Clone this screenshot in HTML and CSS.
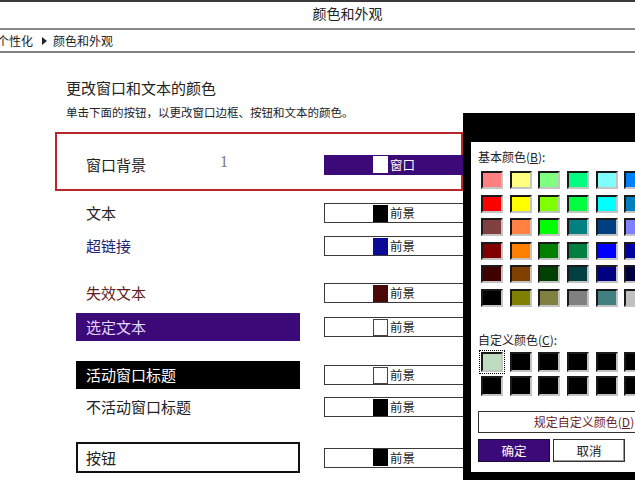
FILE: index.html
```html
<!DOCTYPE html>
<html lang="zh-CN">
<head>
<meta charset="utf-8">
<title>颜色和外观</title>
<link rel="stylesheet" href="styles.css">
</head>
<body>
<header class="titlebar"><span>颜色和外观</span></header>
<nav class="crumbs">
  <span class="crumb-first">个性化</span>
  <svg class="arrow" width="5" height="8" viewBox="0 0 5 8"><path d="M0 0 L5 4 L0 8 Z" fill="#222"/></svg>
  <span>颜色和外观</span>
</nav>
<main class="content">
  <h1 class="heading">更改窗口和文本的颜色</h1>
  <p class="hint">单击下面的按钮，以更改窗口边框、按钮和文本的颜色。</p>
  <div class="rows">
    <div class="row row-hl">
      <div class="label">窗口背景<span class="mark">1</span></div>
      <div class="cbtn cbtn-win"><span class="sw sw-white"></span><span>窗口</span></div>
    </div>
    <div class="row gap8">
      <div class="label">文本</div>
      <div class="cbtn"><span class="sw sw-black"></span><span>前景</span></div>
    </div>
    <div class="row gap5">
      <div class="label lbl-link">超链接</div>
      <div class="cbtn"><span class="sw sw-blue"></span><span>前景</span></div>
    </div>
    <div class="row gap19">
      <div class="label lbl-dis">失效文本</div>
      <div class="cbtn"><span class="sw sw-maroon"></span><span>前景</span></div>
    </div>
    <div class="row gap6">
      <div class="label lbl-sel">选定文本</div>
      <div class="cbtn"><span class="sw sw-white sw-outline"></span><span>前景</span></div>
    </div>
    <div class="row gap20">
      <div class="label lbl-active">活动窗口标题</div>
      <div class="cbtn"><span class="sw sw-white sw-outline"></span><span>前景</span></div>
    </div>
    <div class="row gap4">
      <div class="label">不活动窗口标题</div>
      <div class="cbtn"><span class="sw sw-black"></span><span>前景</span></div>
    </div>
    <div class="row row-btn gap21">
      <div class="label lbl-button">按钮</div>
      <div class="cbtn"><span class="sw sw-black"></span><span>前景</span></div>
    </div>
  </div>
</main>

<section class="dialog">
  <div class="dlg-inner">
    <div class="dlg-label">基本颜色(<u>B</u>):</div>
    <div class="basic">
      <span class="cs" style="background:#ff8080"></span><span class="cs" style="background:#ffff80"></span><span class="cs" style="background:#80ff80"></span><span class="cs" style="background:#00ff80"></span><span class="cs" style="background:#80ffff"></span><span class="cs" style="background:#0080ff"></span><span class="cs" style="background:#ff80c0"></span><span class="cs" style="background:#ff80ff"></span>
      <span class="cs" style="background:#ff0000"></span><span class="cs" style="background:#ffff00"></span><span class="cs" style="background:#80ff00"></span><span class="cs" style="background:#00ff40"></span><span class="cs" style="background:#00ffff"></span><span class="cs" style="background:#0080c0"></span><span class="cs" style="background:#8080c0"></span><span class="cs" style="background:#ff00ff"></span>
      <span class="cs" style="background:#804040"></span><span class="cs" style="background:#ff8040"></span><span class="cs" style="background:#00ff00"></span><span class="cs" style="background:#008080"></span><span class="cs" style="background:#004080"></span><span class="cs" style="background:#8080ff"></span><span class="cs" style="background:#800040"></span><span class="cs" style="background:#ff0080"></span>
      <span class="cs" style="background:#800000"></span><span class="cs" style="background:#ff8000"></span><span class="cs" style="background:#008000"></span><span class="cs" style="background:#008040"></span><span class="cs" style="background:#0000ff"></span><span class="cs" style="background:#0000a0"></span><span class="cs" style="background:#800080"></span><span class="cs" style="background:#8000ff"></span>
      <span class="cs" style="background:#400000"></span><span class="cs" style="background:#804000"></span><span class="cs" style="background:#004000"></span><span class="cs" style="background:#004040"></span><span class="cs" style="background:#000080"></span><span class="cs" style="background:#000040"></span><span class="cs" style="background:#400040"></span><span class="cs" style="background:#400080"></span>
      <span class="cs" style="background:#000000"></span><span class="cs" style="background:#808000"></span><span class="cs" style="background:#808040"></span><span class="cs" style="background:#808080"></span><span class="cs" style="background:#408080"></span><span class="cs" style="background:#c0c0c0"></span><span class="cs" style="background:#400040"></span><span class="cs" style="background:#ffffff"></span>
    </div>
    <div class="dlg-label dlg-label2">自定义颜色(<u>C</u>):</div>
    <div class="custom">
      <span class="cs cs-focus" style="background:#c0dcc0"></span><span class="cs"></span><span class="cs"></span><span class="cs"></span><span class="cs"></span><span class="cs"></span><span class="cs"></span><span class="cs"></span>
      <span class="cs"></span><span class="cs"></span><span class="cs"></span><span class="cs"></span><span class="cs"></span><span class="cs"></span><span class="cs"></span><span class="cs"></span>
    </div>
    <div class="define">规定自定义颜色(<u>D</u>) &gt;&gt;</div>
    <div class="actions">
      <div class="ok">确定</div>
      <div class="cancel">取消</div>
    </div>
  </div>
</section>
</body>
</html>
```

FILE: styles.css
```css
html, body {
  margin: 0;
  padding: 0;
}
body {
  width: 635px;
  height: 493px;
  overflow: hidden;
  position: relative;
  background: #fff;
  color: #222;
  font-family: "Noto Sans CJK SC", "Noto Sans", sans-serif;
}

.titlebar {
  height: 26px;
  border-top: 2px solid #3a3a3a;
  border-bottom: 2px solid #8a8a8a;
  padding-left: 60px;
  text-align: center;
  font-size: 14px;
  line-height: 22px;
  color: #222;
}

.crumbs {
  height: 21px;
  border-bottom: 2px solid #808080;
  display: flex;
  align-items: center;
  font-size: 12px;
  line-height: 21px;
  color: #222;
}
.crumb-first {
  margin-left: -3px;
}
.arrow {
  margin: 0 6px 0 9px;
}

.content {
  padding-left: 55px;
}
.heading {
  margin: 25px 0 0 11px;
  font-size: 15px;
  line-height: 20px;
  font-weight: normal;
  color: #222;
}
.hint {
  margin: 6px 0 0 11px;
  font-size: 11.5px;
  line-height: 16px;
  color: #222;
}

.rows {
  margin-top: 12px;
  display: flex;
  flex-direction: column;
}
.row {
  width: 408px;
  height: 28px;
  box-sizing: border-box;
  padding-left: 21px;
  display: flex;
  align-items: center;
}
.row-hl {
  height: 59px;
  border: 2px solid #b8262a;
  padding-left: 19px;
  padding-top: 6px;
}
.row-btn {
  height: 31px;
}
.gap4 { margin-top: 4px; }
.gap5 { margin-top: 5px; }
.gap6 { margin-top: 6px; }
.gap8 { margin-top: 8px; }
.gap19 { margin-top: 19px; }
.gap20 { margin-top: 20px; }
.gap21 { margin-top: 21px; }

.label {
  width: 224px;
  height: 28px;
  box-sizing: border-box;
  padding-left: 10px;
  font-size: 15px;
  line-height: 28px;
  color: #222;
  flex-shrink: 0;
  white-space: nowrap;
}
.mark {
  font-family: "Liberation Serif", serif;
  font-size: 16px;
  color: #777;
  margin-left: 74px;
  position: relative;
  top: -4px;
}
.lbl-link { color: #22226e; }
.lbl-dis { color: #5e1c1c; }
.lbl-sel {
  background: #3b0a78;
  color: #e4d6fa;
}
.lbl-active {
  background: #000;
  color: #fff;
}
.lbl-button {
  height: 31px;
  border: 2px solid #111;
  padding-left: 8px;
  line-height: 27px;
}

.cbtn {
  margin-left: 24px;
  width: 140px;
  height: 20px;
  box-sizing: border-box;
  border: 1px solid #3a3a3a;
  background: #fff;
  display: flex;
  align-items: center;
  justify-content: center;
  gap: 2px;
  font-size: 12.5px;
  line-height: 18px;
  color: #222;
  flex-shrink: 0;
}
.cbtn-win {
  background: #3b0a78;
  border-color: #3b0a78;
  color: #fff;
}
.sw {
  width: 15px;
  height: 17px;
  box-sizing: border-box;
  display: block;
}
.sw-white { background: #fff; }
.sw-outline { border: 1px solid #444; }
.sw-black { background: #000; }
.sw-blue { background: #0a0a96; }
.sw-maroon { background: #4a0808; }

.dialog {
  position: absolute;
  left: 463px;
  top: 113px;
  width: 190px;
  height: 367px;
  box-sizing: border-box;
  background: #000;
  padding: 29px 0 8px 8px;
}
.dlg-inner {
  height: 100%;
  background: #fff;
  box-sizing: border-box;
  padding: 7px 0 0 7px;
}
.dlg-label {
  font-size: 12px;
  line-height: 16px;
  color: #222;
  white-space: nowrap;
}
.dlg-label2 {
  margin-top: 25px;
}
.basic {
  margin: 6px 0 0 3px;
  display: grid;
  grid-template-columns: repeat(8, 22px);
  grid-auto-rows: 18px;
  column-gap: 6.7px;
  row-gap: 5.6px;
}
.custom {
  margin: 4px 0 0 3px;
  display: grid;
  grid-template-columns: repeat(8, 22px);
  grid-auto-rows: 20px;
  column-gap: 6.7px;
  row-gap: 4px;
}
.cs {
  display: block;
  box-sizing: border-box;
  background: #000;
  border-style: solid;
  border-width: 2px;
  border-color: #1a1a1a #c4c4c4 #c4c4c4 #1a1a1a;
}
.cs-focus {
  outline: 1px dotted #000;
  outline-offset: 1px;
}
.define {
  margin-top: 15px;
  width: 228px;
  height: 22px;
  box-sizing: border-box;
  border: 1px solid #333;
  font-size: 12px;
  line-height: 20px;
  text-align: center;
  color: #6a1e1e;
  white-space: nowrap;
}
.actions {
  margin-top: 6px;
  display: flex;
  gap: 3px;
}
.ok, .cancel {
  width: 72px;
  height: 23px;
  box-sizing: border-box;
  font-size: 12.5px;
  line-height: 21px;
  text-align: center;
}
.ok {
  background: #3b0a78;
  border: 1px solid #1a0a3a;
  color: #fff;
}
.cancel {
  background: #fff;
  border: 1px solid #333;
  box-shadow: inset -1px -1px 0 #999;
  color: #222;
}
```
